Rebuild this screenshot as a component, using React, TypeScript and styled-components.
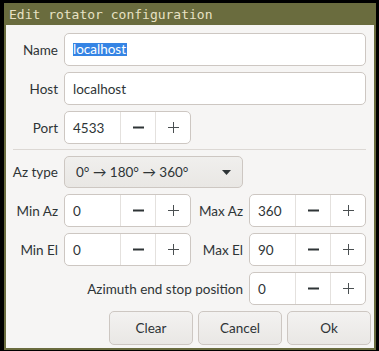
import styled, { createGlobalStyle } from "styled-components";

const Global = createGlobalStyle`
  html, body { margin: 0; padding: 0; background: #000; }
  * { box-sizing: border-box; }
`;

const Screen = styled.div`
  width: 379px;
  height: 351px;
  background: #000;
  padding: 3px 3px 1px 4px;
`;

const Window = styled.div`
  height: 100%;
  background: #6a6c3e;
  padding: 0 2px 2px 2px;
  display: flex;
  flex-direction: column;
`;

const TitleBar = styled.div`
  height: 22px;
  flex: none;
  padding-left: 3px;
  display: flex;
  align-items: center;
  font-family: "DejaVu Sans Mono", monospace;
  font-size: 13px;
  color: #e8e2c4;
  white-space: pre;
`;

const Content = styled.div`
  flex: 1;
  background: #f6f5f4;
  padding: 8px 8px 0 7px;
  font-family: Lato, "Noto Sans", sans-serif;
  font-size: 13.5px;
  color: #2e3436;
  display: flex;
  flex-direction: column;
`;

const TopGrid = styled.div`
  display: grid;
  grid-template-columns: 45px 1fr;
  column-gap: 6px;
  row-gap: 6px;
  align-items: center;
`;

const Label = styled.div<{ $span?: number }>`
  justify-self: end;
  white-space: nowrap;
  grid-column: ${(p) => (p.$span ? `span ${p.$span}` : "auto")};
`;

const Entry = styled.div`
  height: 33px;
  background: #fff;
  border: 1px solid #cdc7c2;
  border-radius: 5px;
  padding-left: 8px;
  display: flex;
  align-items: center;
`;

const Selected = styled.span`
  background: #3584e4;
  color: #fff;
  line-height: 13px;
  padding: 0 1px 0 0;
`;

const Spin = styled.div<{ $w: number }>`
  width: ${(p) => p.$w}px;
  height: 33px;
  background: #fff;
  border: 1px solid #cdc7c2;
  border-radius: 5px;
  display: flex;
`;

const SpinText = styled.div`
  flex: 1;
  padding-left: 8px;
  display: flex;
  align-items: center;
`;

const SpinBtn = styled.div`
  width: 35px;
  border-left: 1px solid #e4e1de;
  display: flex;
  align-items: center;
  justify-content: center;
`;

const Separator = styled.div`
  height: 1px;
  background: #dcd8d4;
  margin: 5px 0 6px 0;
`;

const Combo = styled.div`
  width: 179px;
  height: 32px;
  border: 1px solid #cdc7c2;
  border-radius: 5px;
  background: linear-gradient(#f0efed, #e9e7e4);
  padding: 0 11px 0 11px;
  display: flex;
  align-items: center;
  justify-content: space-between;
`;

const LowerGrid = styled.div`
  display: grid;
  grid-template-columns: 45px 127px 46px 117px;
  column-gap: 6px;
  row-gap: 6px;
  align-items: center;
  margin-top: 6px;
`;

const Buttons = styled.div`
  display: flex;
  justify-content: flex-end;
  gap: 5px;
  margin: 6px -5px 0 0;
`;

const Button = styled.div`
  width: 84px;
  height: 34px;
  border: 1px solid #cdc7c2;
  border-radius: 5px;
  background: linear-gradient(#f3f2f1, #e9e7e4);
  display: flex;
  align-items: center;
  justify-content: center;
`;

const Minus = () => (
  <svg width="11" height="11" viewBox="0 0 11 11">
    <rect x="0" y="4.5" width="11" height="2" fill="#2e3436" />
  </svg>
);

const Plus = () => (
  <svg width="11" height="11" viewBox="0 0 11 11">
    <rect x="0" y="5" width="11" height="1" fill="#4a4f51" />
    <rect x="5" y="0" width="1" height="11" fill="#4a4f51" />
  </svg>
);

const Arrow = () => (
  <svg width="9" height="5" viewBox="0 0 9 5">
    <path d="M0 0 H9 L4.5 5 Z" fill="#2e3436" />
  </svg>
);

function SpinBox({ value, w }: { value: string; w: number }) {
  return (
    <Spin $w={w}>
      <SpinText>{value}</SpinText>
      <SpinBtn>
        <Minus />
      </SpinBtn>
      <SpinBtn>
        <Plus />
      </SpinBtn>
    </Spin>
  );
}

export default function App() {
  return (
    <Screen>
      <Global />
      <Window>
        <TitleBar>Edit rotator configuration</TitleBar>
        <Content>
          <TopGrid>
            <Label>Name</Label>
            <Entry>
              <Selected>localhost</Selected>
            </Entry>
            <Label>Host</Label>
            <Entry>localhost</Entry>
            <Label>Port</Label>
            <SpinBox value="4533" w={127} />
          </TopGrid>
          <Separator />
          <TopGrid>
            <Label>Az type</Label>
            <Combo>
              <span>0° → 180° → 360°</span>
              <Arrow />
            </Combo>
          </TopGrid>
          <LowerGrid>
            <Label>Min Az</Label>
            <SpinBox value="0" w={127} />
            <Label>Max Az</Label>
            <SpinBox value="360" w={117} />
            <Label>Min El</Label>
            <SpinBox value="0" w={127} />
            <Label>Max El</Label>
            <SpinBox value="90" w={117} />
            <Label $span={3}>Azimuth end stop position</Label>
            <SpinBox value="0" w={117} />
          </LowerGrid>
          <Buttons>
            <Button>Clear</Button>
            <Button>Cancel</Button>
            <Button>Ok</Button>
          </Buttons>
        </Content>
      </Window>
    </Screen>
  );
}
